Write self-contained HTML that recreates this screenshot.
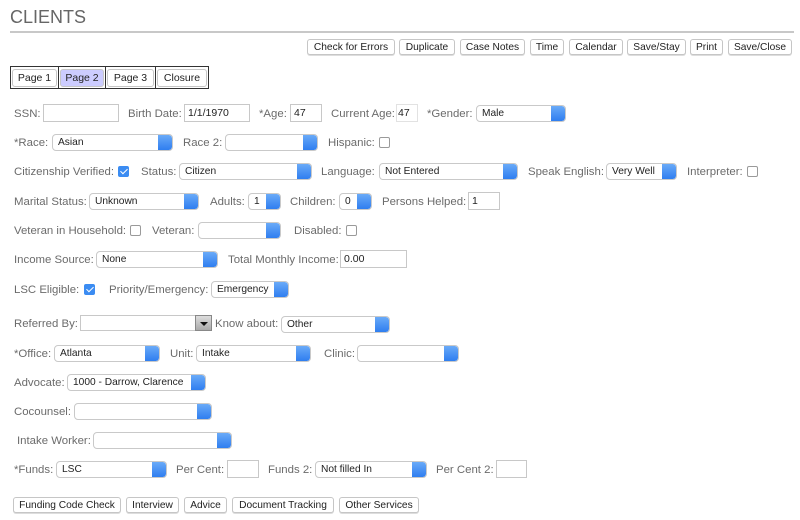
<!DOCTYPE html>
<html><head><meta charset="utf-8"><style>
*{box-sizing:border-box;margin:0;padding:0}
body{width:800px;height:520px;background:#fff;font-family:"Liberation Sans",Arial,sans-serif;position:relative;overflow:hidden}
.a{position:absolute}
h1{position:absolute;left:10px;top:7px;font-size:18px;font-weight:normal;color:#666;letter-spacing:0}
.hr{position:absolute;left:10px;top:31px;width:784px;height:2px;background:#c8c8c8}
.l{position:absolute;font-size:11.4px;color:#6b6b6b;line-height:14px;white-space:nowrap;margin-top:1px}
.b{position:absolute;height:16px;border:1px solid #c6c6c6;border-radius:3px;background:#fff;font-size:10.2px;color:#222;text-align:center;line-height:15px;box-shadow:0 1px 0 #ddd;white-space:nowrap}
.i{position:absolute;height:18px;border:1px solid #c8c8c8;background:#fff;font-size:10.5px;color:#222;line-height:17px;padding-left:3px}
.s{position:absolute;height:17px;border:1px solid #c9c9c9;border-radius:4px;background:#fff;font-size:10.2px;color:#222;line-height:16px;padding-left:5px;overflow:hidden;white-space:nowrap}
.s:after{content:"";position:absolute;right:0;top:0;width:14px;height:15px;background:linear-gradient(#6aaaf8,#2f7ef0);border-radius:0 3px 3px 0}
.c{position:absolute;width:11px;height:11px;border:1px solid #9a9a9a;border-radius:2px;background:#fff}
.ck{background:#3b8cf2;border-color:#3b8cf2}
.ck:after{content:"";position:absolute;left:3px;top:0px;width:3px;height:6px;border:solid #fff;border-width:0 1.5px 1.5px 0;transform:rotate(45deg)}
.t{position:absolute;top:69px;height:18px;border:1px solid #c6c6c6;border-radius:3px;background:#fff;font-size:10.5px;text-align:center;line-height:17px;color:#222}
</style></head><body>
<h1>CLIENTS</h1><div class="hr"></div>
<div class="b" style="left:307px;top:39px;width:88px">Check for Errors</div>
<div class="b" style="left:399px;top:39px;width:56px">Duplicate</div>
<div class="b" style="left:460px;top:39px;width:65px">Case Notes</div>
<div class="b" style="left:530px;top:39px;width:34px">Time</div>
<div class="b" style="left:569px;top:39px;width:54px">Calendar</div>
<div class="b" style="left:627px;top:39px;width:59px">Save/Stay</div>
<div class="b" style="left:690px;top:39px;width:33px">Print</div>
<div class="b" style="left:728px;top:39px;width:64px">Save/Close</div>

<div class="a" style="left:10px;top:66px;width:199px;height:23px;border:1px solid #333"></div>
<div class="a" style="left:58px;top:66px;width:1px;height:23px;background:#333"></div>
<div class="a" style="left:105px;top:66px;width:1px;height:23px;background:#333"></div>
<div class="a" style="left:155px;top:66px;width:1px;height:23px;background:#333"></div>
<div class="t" style="left:12px;width:45px">Page 1</div>
<div class="t" style="left:60px;width:44px;background:#ccccff">Page 2</div>
<div class="t" style="left:107px;width:47px">Page 3</div>
<div class="t" style="left:157px;width:50px">Closure</div>

<div class="l" style="left:14px;top:106px">SSN:</div><div class="i" style="left:43px;top:104px;width:76px"></div>
<div class="l" style="left:128px;top:106px">Birth Date:</div><div class="i" style="left:184px;top:104px;width:66px">1/1/1970</div>
<div class="l" style="left:259px;top:106px">*Age:</div><div class="i" style="left:290px;top:104px;width:32px">47</div>
<div class="l" style="left:331px;top:106px">Current Age:</div><div class="i" style="left:396px;top:104px;width:22px;border-color:#e2e2e2;padding-left:1px">47</div>
<div class="l" style="left:427px;top:106px">*Gender:</div><div class="s" style="left:476px;top:105px;width:90px">Male</div>

<div class="l" style="left:14px;top:135px">*Race:</div><div class="s" style="left:52px;top:134px;width:121px">Asian</div>
<div class="l" style="left:183px;top:135px">Race 2:</div><div class="s" style="left:225px;top:134px;width:93px"></div>
<div class="l" style="left:328px;top:135px">Hispanic:</div><div class="c" style="left:379px;top:137px"></div>

<div class="l" style="left:14px;top:164px">Citizenship Verified:</div><div class="c ck" style="left:118px;top:166px"></div>
<div class="l" style="left:141px;top:164px">Status:</div><div class="s" style="left:179px;top:163px;width:133px">Citizen</div>
<div class="l" style="left:321px;top:164px">Language:</div><div class="s" style="left:379px;top:163px;width:139px">Not Entered</div>
<div class="l" style="left:528px;top:164px">Speak English:</div><div class="s" style="left:606px;top:163px;width:71px">Very Well</div>
<div class="l" style="left:687px;top:164px">Interpreter:</div><div class="c" style="left:747px;top:166px"></div>

<div class="l" style="left:14px;top:194px">Marital Status:</div><div class="s" style="left:89px;top:193px;width:110px">Unknown</div>
<div class="l" style="left:210px;top:194px">Adults:</div><div class="s" style="left:248px;top:193px;width:33px">1</div>
<div class="l" style="left:290px;top:194px">Children:</div><div class="s" style="left:339px;top:193px;width:33px">0</div>
<div class="l" style="left:382px;top:194px">Persons Helped:</div><div class="i" style="left:468px;top:192px;width:32px">1</div>

<div class="l" style="left:14px;top:223px">Veteran in Household:</div><div class="c" style="left:130px;top:225px"></div>
<div class="l" style="left:152px;top:223px">Veteran:</div><div class="s" style="left:198px;top:222px;width:83px"></div>
<div class="l" style="left:294px;top:223px">Disabled:</div><div class="c" style="left:346px;top:225px"></div>

<div class="l" style="left:14px;top:252px">Income Source:</div><div class="s" style="left:96px;top:251px;width:122px">None</div>
<div class="l" style="left:228px;top:252px">Total Monthly Income:</div><div class="i" style="left:340px;top:250px;width:67px">0.00</div>

<div class="l" style="left:14px;top:282px">LSC Eligible:</div><div class="c ck" style="left:84px;top:284px"></div>
<div class="l" style="left:109px;top:282px">Priority/Emergency:</div><div class="s" style="left:211px;top:281px;width:78px">Emergency</div>

<div class="l" style="left:14px;top:316px">Referred By:</div>
<div class="i" style="left:80px;top:315px;width:132px;height:16px"></div>
<div class="a" style="left:195px;top:315px;width:17px;height:16px;background:linear-gradient(#ddd,#aaa);border:1px solid #888"></div>
<div class="a" style="left:200px;top:322px;width:0;height:0;border-left:4px solid transparent;border-right:4px solid transparent;border-top:4px solid #111"></div>
<div class="l" style="left:215px;top:316px">Know about:</div><div class="s" style="left:281px;top:316px;width:109px">Other</div>

<div class="l" style="left:14px;top:346px">*Office:</div><div class="s" style="left:54px;top:345px;width:106px">Atlanta</div>
<div class="l" style="left:170px;top:346px">Unit:</div><div class="s" style="left:196px;top:345px;width:115px">Intake</div>
<div class="l" style="left:324px;top:346px">Clinic:</div><div class="s" style="left:357px;top:345px;width:102px"></div>

<div class="l" style="left:14px;top:375px">Advocate:</div><div class="s" style="left:67px;top:374px;width:139px">1000 - Darrow, Clarence</div>
<div class="l" style="left:14px;top:404px">Cocounsel:</div><div class="s" style="left:74px;top:403px;width:138px"></div>
<div class="l" style="left:17px;top:433px">Intake Worker:</div><div class="s" style="left:93px;top:432px;width:139px"></div>

<div class="l" style="left:14px;top:462px">*Funds:</div><div class="s" style="left:56px;top:461px;width:111px">LSC</div>
<div class="l" style="left:176px;top:462px">Per Cent:</div><div class="i" style="left:227px;top:460px;width:32px"></div>
<div class="l" style="left:268px;top:462px">Funds 2:</div><div class="s" style="left:315px;top:461px;width:112px">Not filled In</div>
<div class="l" style="left:436px;top:462px">Per Cent 2:</div><div class="i" style="left:496px;top:460px;width:31px"></div>

<div class="b" style="left:13px;top:497px;width:108px">Funding Code Check</div>
<div class="b" style="left:126px;top:497px;width:53px">Interview</div>
<div class="b" style="left:184px;top:497px;width:43px">Advice</div>
<div class="b" style="left:232px;top:497px;width:102px">Document Tracking</div>
<div class="b" style="left:339px;top:497px;width:80px">Other Services</div>
</body></html>
